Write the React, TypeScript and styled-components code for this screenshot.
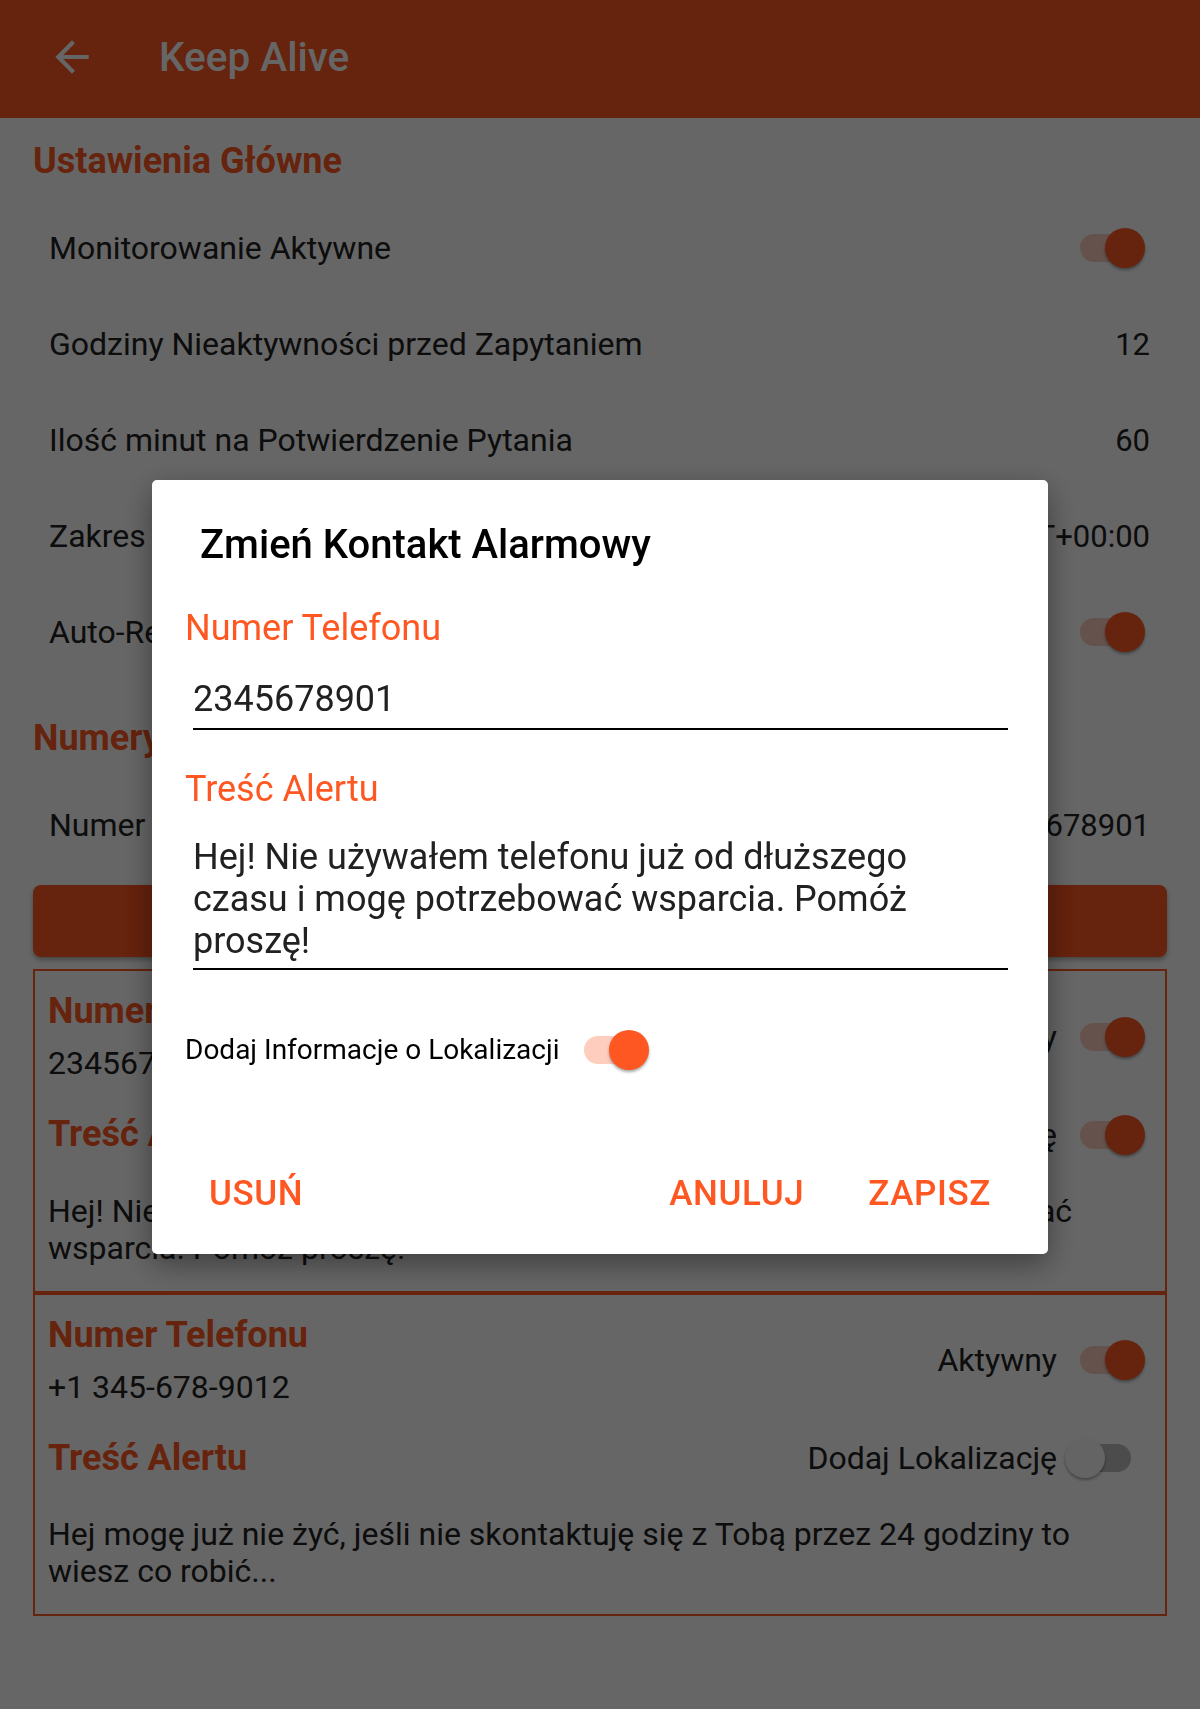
import React from "react"
import styled, { createGlobalStyle } from "styled-components"

const PRIMARY = "#FF5722"
const TEXT = "#212121"

const GlobalStyle = createGlobalStyle`
    html, body {
        margin: 0;
        padding: 0;
    }
    body {
        background: #fff;
        color: ${TEXT};
        font-family: Roboto, "Noto Sans", "Liberation Sans", sans-serif;
    }
    * {
        box-sizing: border-box;
    }
`

type SwitchProps = { on: boolean }

const Switch = ({ on }: SwitchProps) => (
    <SwitchBox>
        <Track $on={on} />
        <Thumb $on={on} />
    </SwitchBox>
)

const BackArrow = () => (
    <BackIcon viewBox="0 0 24 24">
        <path d="M20 11H7.83l5.59-5.59L12 4l-8 8 8 8 1.41-1.41L7.83 13H20v-2z" />
    </BackIcon>
)

type ContactProps = {
    phone: string
    active: boolean
    location: boolean
    message: string
}

const Contact = ({ phone, active, location, message }: ContactProps) => (
    <ContactCard>
        <CardTop>
            <div>
                <CardHeading>Numer Telefonu</CardHeading>
                <CardPhone>{phone}</CardPhone>
            </div>
            <ToggleLabel>
                Aktywny
                <Switch on={active} />
            </ToggleLabel>
        </CardTop>
        <CardRow>
            <CardHeading>Treść Alertu</CardHeading>
            <ToggleLabel>
                Dodaj Lokalizację
                <Switch on={location} />
            </ToggleLabel>
        </CardRow>
        <CardBody>{message}</CardBody>
    </ContactCard>
)

export default function App() {
    return (
        <>
            <GlobalStyle />
            <Screen>
                <AppBar>
                    <BackArrow />
                    <AppTitle>Keep Alive</AppTitle>
                </AppBar>
                <Content>
                    <SectionTitle $first>Ustawienia Główne</SectionTitle>
                    <PrefRow>
                        <PrefTitle>Monitorowanie Aktywne</PrefTitle>
                        <Switch on />
                    </PrefRow>
                    <PrefRow>
                        <PrefTitle>Godziny Nieaktywności przed Zapytaniem</PrefTitle>
                        <PrefValue>12</PrefValue>
                    </PrefRow>
                    <PrefRow>
                        <PrefTitle>Ilość minut na Potwierdzenie Pytania</PrefTitle>
                        <PrefValue>60</PrefValue>
                    </PrefRow>
                    <PrefRow>
                        <PrefTitle>Zakres Strefy Czasowej</PrefTitle>
                        <PrefValue>GMT+00:00</PrefValue>
                    </PrefRow>
                    <PrefRow>
                        <PrefTitle>Auto-Restart Monitorowania</PrefTitle>
                        <Switch on />
                    </PrefRow>

                    <SectionTitle>Numery Alarmowe</SectionTitle>
                    <PrefRow>
                        <PrefTitle>Numer Testowy</PrefTitle>
                        <PrefValue>12345678901</PrefValue>
                    </PrefRow>
                    <AddButton>DODAJ KONTAKT</AddButton>

                    <Contact
                        phone="2345678901"
                        active
                        location
                        message="Hej! Nie używałem telefonu już od dłuższego czasu i mogę potrzebować wsparcia. Pomóż proszę!"
                    />
                    <Contact
                        phone="+1 345-678-9012"
                        active
                        location={false}
                        message="Hej mogę już nie żyć, jeśli nie skontaktuję się z Tobą przez 24 godziny to wiesz co robić..."
                    />
                </Content>
            </Screen>

            <Backdrop>
                <Dialog>
                    <DialogTitle>Zmień Kontakt Alarmowy</DialogTitle>
                    <FieldLabel>Numer Telefonu</FieldLabel>
                    <Field $gap={29}>
                        <FieldText>2345678901</FieldText>
                    </Field>
                    <FieldLabel $gap={37.6}>Treść Alertu</FieldLabel>
                    <Field $gap={26} $multiline>
                        <FieldText>
                            Hej! Nie używałem telefonu już od dłuższego czasu i mogę potrzebować wsparcia. Pomóż proszę!
                        </FieldText>
                    </Field>
                    <DialogSwitchRow>
                        Dodaj Informacje o Lokalizacji
                        <Switch on />
                    </DialogSwitchRow>
                    <DialogActions>
                        <TextButton>USUŃ</TextButton>
                        <ActionGroup>
                            <TextButton>ANULUJ</TextButton>
                            <TextButton>ZAPISZ</TextButton>
                        </ActionGroup>
                    </DialogActions>
                </Dialog>
            </Backdrop>
        </>
    )
}

const Screen = styled.div`
    min-height: 100vh;
    background: #fff;
`

const AppBar = styled.header`
    height: 118px;
    background: ${PRIMARY};
    display: flex;
    align-items: center;
    padding: 0 0 4px 47px;
`

const BackIcon = styled.svg`
    width: 50px;
    height: 50px;
    fill: #fff;
    flex: none;
`

const AppTitle = styled.h1`
    margin: 0 0 0 62px;
    font-size: 40.5px;
    font-weight: 500;
    color: #fff;
`

const Content = styled.main`
    padding: 0 33px;
`

const SectionTitle = styled.h2<{ $first?: boolean }>`
    margin: ${p => (p.$first ? "23px" : "38px")} 0 18px;
    font-size: 36px;
    line-height: 41px;
    font-weight: 700;
    color: ${PRIMARY};
`

const PrefRow = styled.div`
    height: 96px;
    display: flex;
    align-items: center;
    justify-content: space-between;
    padding: 0 17px 0 16px;
`

const PrefTitle = styled.span`
    font-size: 32px;
    white-space: nowrap;
`

const PrefValue = styled.span`
    font-size: 31px;
    white-space: nowrap;
`

const SwitchBox = styled.span`
    position: relative;
    display: inline-block;
    flex: none;
    width: 80px;
    height: 40px;
    margin-right: 5px;
`

const Track = styled.span<{ $on: boolean }>`
    position: absolute;
    left: 15px;
    top: 6px;
    width: 51px;
    height: 28px;
    border-radius: 14px;
    background: ${p => (p.$on ? "#FFCDBD" : "#BEBEBE")};
`

const Thumb = styled.span<{ $on: boolean }>`
    position: absolute;
    top: 0;
    left: ${p => (p.$on ? "40px" : "0")};
    width: 40px;
    height: 40px;
    border-radius: 50%;
    background: ${p => (p.$on ? PRIMARY : "#FAFAFA")};
    box-shadow: 0 2px 3px rgba(0, 0, 0, 0.35);
`

const AddButton = styled.button`
    display: block;
    width: 100%;
    height: 72px;
    margin: 12px 0;
    border: none;
    border-radius: 8px;
    background: ${PRIMARY};
    color: #fff;
    font-family: inherit;
    font-size: 33px;
    font-weight: 500;
    box-shadow: 0 3px 5px rgba(0, 0, 0, 0.3);
`

const ContactCard = styled.section`
    border: 2px solid ${PRIMARY};
    padding: 20px 15px 24px 13px;
`

const CardTop = styled.div`
    display: flex;
    align-items: center;
    justify-content: space-between;
`

const CardRow = styled.div`
    display: flex;
    align-items: center;
    justify-content: space-between;
    margin-top: 31.5px;
`

const CardHeading = styled.div`
    font-size: 36px;
    line-height: 41px;
    font-weight: 700;
    color: ${PRIMARY};
`

const CardPhone = styled.div`
    margin-top: 13px;
    font-size: 32px;
    line-height: 37.5px;
`

const ToggleLabel = styled.div`
    display: flex;
    align-items: center;
    gap: 8px;
    font-size: 32px;
`

const CardBody = styled.p`
    margin: 37.5px 0 0;
    max-width: 1050px;
    font-size: 32px;
    line-height: 37px;
`

const Backdrop = styled.div`
    position: fixed;
    inset: 0;
    background: rgba(0, 0, 0, 0.6);
    display: flex;
    justify-content: center;
    align-items: flex-start;
    padding-top: 480px;
`

const Dialog = styled.div`
    width: 896px;
    background: #fff;
    border-radius: 5px;
    padding-bottom: 24px;
    box-shadow: 0 10px 30px rgba(0, 0, 0, 0.4);
`

const DialogTitle = styled.h3`
    margin: 42px 0 0 48px;
    font-size: 40px;
    line-height: 46px;
    font-weight: 500;
    color: #000;
`

const FieldLabel = styled.div<{ $gap?: number }>`
    margin: ${p => p.$gap ?? 39}px 0 0 33px;
    font-size: 36px;
    line-height: 42px;
    color: ${PRIMARY};
`

const Field = styled.div<{ $gap: number; $multiline?: boolean }>`
    margin: ${p => p.$gap}px 40px 0 41px;
    padding: 0 0 ${p => (p.$multiline ? 6 : 8)}px 0;
    border-bottom: 2px solid #000;
    font-size: 36px;
    line-height: 42px;
    color: ${TEXT};
`

const FieldText = styled.div`
    max-width: 770px;
`

const DialogSwitchRow = styled.div`
    height: 60px;
    margin: 50.4px 0 0 33px;
    display: flex;
    align-items: center;
    gap: 9px;
    font-size: 28px;
    color: #000;
`

const DialogActions = styled.div`
    margin-top: 78px;
    padding: 0 40px 0 40px;
    display: flex;
    justify-content: space-between;
`

const ActionGroup = styled.div`
    display: flex;
    gap: 30px;
`

const TextButton = styled.button`
    height: 72px;
    padding: 0 17px;
    border: none;
    background: none;
    color: ${PRIMARY};
    font-family: inherit;
    font-size: 35px;
    font-weight: 500;
    letter-spacing: 0.6px;
`
